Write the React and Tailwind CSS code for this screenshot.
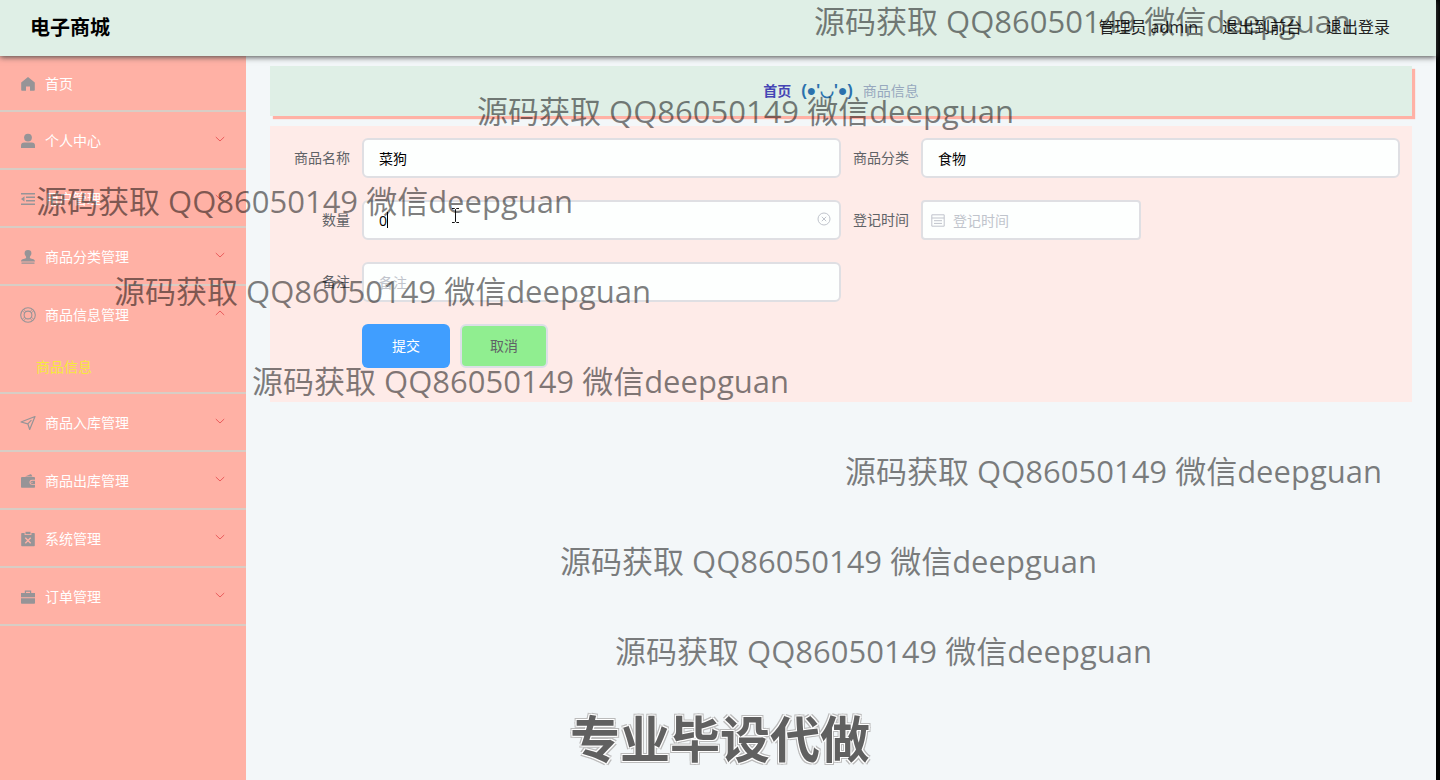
import React, { useState } from "react";

const glyph = "h-4 w-4 shrink-0 text-[#969497]";

const HomeIcon = () => (
  <svg className={glyph} viewBox="0 0 16 16" fill="currentColor">
    <path d="M8 1 1.200 6.600V14a.8.8 0 0 0 .8.8h4v-4.300h4v4.300h4a.8.8 0 0 0 .8-.8V6.600z" />
  </svg>
);

const UserIcon = () => (
  <svg className={glyph} viewBox="0 0 16 16" fill="currentColor">
    <circle cx="8" cy="4.6" r="3.9" />
    <path d="M1 15v-2.200A3.300 3.300 0 0 1 4.300 9.500h7.400A3.300 3.300 0 0 1 15 12.800V15z" />
  </svg>
);

const FoldIcon = () => (
  <svg className={glyph} viewBox="0 0 16 16" fill="currentColor">
    <path d="M1 2h14v1.500H1zM6 5.500h9V7H6zM6 9h9v1.500H6zM1 12.500h14V14H1zM4.500 5.200v5.600L1 8z" />
  </svg>
);

const StampIcon = () => (
  <svg className={glyph} viewBox="0 0 16 16" fill="currentColor">
    <path d="M8 1a3.400 3.400 0 0 0-3.400 3.500c0 2 1.900 2.500 1.500 4.300-.3 1.200-5.100.6-5.100 3.700h14c0-3.100-4.800-2.500-5.100-3.700-.4-1.800 1.500-2.300 1.500-4.300A3.400 3.400 0 0 0 8 1zM1.500 13.500h13v1.300h-13z" />
  </svg>
);

const HelpIcon = () => (
  <svg className={glyph} viewBox="0 0 16 16" fill="none" stroke="currentColor" strokeWidth="1.100">
    <circle cx="8" cy="8" r="7.300" />
    <circle cx="8" cy="8" r="3.900" />
    <path d="m3.900 2.300 2 2.600M2.300 3.900l2.600 2M12.100 2.300l-2 2.600M13.700 3.900l-2.600 2M3.900 13.700l2-2.600M2.300 12.100l2.600-2M12.100 13.700l-2-2.600M13.700 12.100l-2.600-2" strokeWidth=".8" />
  </svg>
);

const PositionIcon = () => (
  <svg className={glyph} viewBox="0 0 16 16" fill="none" stroke="currentColor" strokeWidth="1.200" strokeLinejoin="round">
    <path d="M15 1.500 9.700 14.500 7.800 8.800 1 7z" />
    <path d="m7.800 8.800 3.600-3.700" />
  </svg>
);

const WalletIcon = () => (
  <svg className={glyph} viewBox="0 0 16 16" fill="currentColor">
    <path d="m5 3.600 5.500-2.300a.8.8 0 0 1 1 .4l.9 1.900z" />
    <path d="M2 4h12a1 1 0 0 1 1 1v1.800h-3a2.500 2.500 0 0 0 0 5h3V14a.8.8 0 0 1-.8.8H1.800A.8.8 0 0 1 1 14V5a1 1 0 0 1 1-1z" />
    <path d="M12 7.700h3v3.200h-3a1.600 1.600 0 0 1 0-3.200zm0 1a.6.6 0 1 0 0 1.200.6.6 0 0 0 0-1.200z" fillRule="evenodd" />
  </svg>
);

const ClipboardIcon = () => (
  <svg className={glyph} viewBox="0 0 16 16" fill="currentColor">
    <path d="M5.500.8h5v2.400h-5z" />
    <path d="M2 2h2.600v2h6.800V2H14a.8.8 0 0 1 .8.800V14.500a.8.8 0 0 1-.8.800H2a.8.8 0 0 1-.8-.8V2.800A.8.8 0 0 1 2 2z" />
    <path d="m5.300 6.800 5.400 5.400m0-5.400-5.400 5.400" stroke="#ffb1a5" strokeWidth="1.400" />
  </svg>
);

const CaseIcon = () => (
  <svg className={glyph} viewBox="0 0 16 16" fill="currentColor">
    <path d="M4.800 4V1.500h6.400V4H15v4.200H1V4zm1.200 0h4V2.700H6zM1 9.200h14v4.800a.8.800 0 0 1-.8.800H1.800A.8.8 0 0 1 1 14z" fillRule="evenodd" />
  </svg>
);

const Arrow = ({ up }) => (
  <svg className={`mb-1 h-3 w-3 text-[#ea5c5c] ${up ? "rotate-180" : ""}`} viewBox="0 0 12 12" fill="none" stroke="currentColor">
    <path d="m1.800 4 4.200 4 4.200-4" />
  </svg>
);

const menus = [
  { label: "个人中心", icon: <UserIcon /> },
  { label: "用户管理", icon: <FoldIcon /> },
  { label: "商品分类管理", icon: <StampIcon /> },
  { label: "商品信息管理", icon: <HelpIcon />, children: ["商品信息"] },
  { label: "商品入库管理", icon: <PositionIcon /> },
  { label: "商品出库管理", icon: <WalletIcon /> },
  { label: "系统管理", icon: <ClipboardIcon /> },
  { label: "订单管理", icon: <CaseIcon /> },
];

// overlay lines, one every 90px
const marks = [
  "top-0 left-[814px]",
  "top-[90px] left-[477px]",
  "top-[180px] left-[36px]",
  "top-[270px] left-[114px]",
  "top-[360px] left-[252px]",
  "top-[450px] left-[845px]",
  "top-[540px] left-[560px]",
  "top-[630px] left-[615px]",
];

const inputStyle =
  "h-10 w-full rounded-md border-2 border-[#dfdfe3] bg-[#fdfffe] px-[15px] text-sm text-black outline-none placeholder:text-[#c0c4cc]";

const Field = ({ id, label, children }) => (
  <div className="flex items-center">
    <label htmlFor={id} className="w-20 shrink-0 pr-3 text-right text-sm text-[#606266]">
      {label}
    </label>
    <div className="relative flex-1">{children}</div>
  </div>
);

const Sidebar = () => {
  const [open, setOpen] = useState("商品信息管理");

  return (
    <aside className="w-[246px] shrink-0 bg-[#ffb1a5] text-sm text-white">
      <nav>
        <a href="#home" className="flex h-14 items-center gap-[9px] border-b-2 border-[#d8cdc5] pt-[2px] pl-5">
          <HomeIcon />
          首页
        </a>
        {menus.map((menu) => (
          <div key={menu.label} className="border-b-2 border-[#d8cdc5]">
            <button
              type="button"
              onClick={() => setOpen(open === menu.label ? "" : menu.label)}
              className="flex h-14 w-full items-center gap-[9px] pt-[2px] pr-5 pl-5"
            >
              {menu.icon}
              <span className="flex-1 text-left">{menu.label}</span>
              <Arrow up={open === menu.label} />
            </button>
            {open === menu.label &&
              menu.children?.map((child) => (
                <a key={child} href="#goods" className="flex h-[50px] items-center pl-9 text-[#f5ea3c]">
                  {child}
                </a>
              ))}
          </div>
        ))}
      </nav>
    </aside>
  );
};

const GoodsForm = () => {
  const [name, setName] = useState("菜狗");
  const [category, setCategory] = useState("食物");
  const [count, setCount] = useState("0");

  return (
    <form className="bg-[#feebe8] px-3 pt-3 pb-[34px]" onSubmit={(e) => e.preventDefault()}>
      <div className="grid grid-cols-2 gap-y-[22px]">
        <Field id="name" label="商品名称">
          <input id="name" className={inputStyle} value={name} onChange={(e) => setName(e.target.value)} />
        </Field>
        <Field id="category" label="商品分类">
          <input id="category" className={inputStyle} value={category} onChange={(e) => setCategory(e.target.value)} />
        </Field>
        <Field id="count" label="数量">
          <input id="count" className={inputStyle} value={count} onChange={(e) => setCount(e.target.value)} />
          <span className="absolute top-3 left-[25px] h-4 w-px bg-black" />
          <button type="button" aria-label="清空" onClick={() => setCount("")} className="absolute top-3 right-[10px]">
            <svg className="h-3.5 w-3.5 text-[#c0c4cc]" viewBox="0 0 14 14" fill="none" stroke="currentColor">
              <circle cx="7" cy="7" r="6" />
              <path d="m4.800 4.800 4.400 4.400m0-4.400L4.800 9.200" />
            </svg>
          </button>
        </Field>
        <Field id="date" label="登记时间">
          <div className="relative w-[220px]">
            <input
              id="date"
              placeholder="登记时间"
              className="h-10 w-full rounded border-2 border-[#dfdfe3] bg-[#fdfffe] pl-[30px] text-sm outline-none placeholder:text-[#c0c4cc]"
            />
            <svg className="absolute top-[13px] left-[10px] h-3.5 w-3.5 text-[#c0c4cc]" viewBox="0 0 14 14" fill="none" stroke="currentColor">
              <path d="M.8 1.800h12.400v11.400H.8zM.8 5h12.400M3 7.700h8M3 10.400h8" />
            </svg>
          </div>
        </Field>
        <Field id="remark" label="备注">
          <input id="remark" placeholder="备注" className={inputStyle} />
        </Field>
      </div>
      <div className="mt-[22px] flex items-center gap-[10px] pl-20">
        <button type="submit" className="h-11 w-[88px] rounded-md bg-[#409eff] text-sm text-white">
          提交
        </button>
        <button type="button" className="h-11 w-[88px] rounded-md border-2 border-[#dcdfe6] bg-[#90ee90] text-sm text-[#606266]">
          取消
        </button>
      </div>
    </form>
  );
};

export default function App() {
  return (
    <div className="relative flex min-h-screen overflow-hidden bg-black pr-1 font-['Open_Sans','Noto_Sans_CJK_SC',sans-serif]">
      <div className="flex flex-1 flex-col bg-[#f3f7f9]">
        <header className="z-10 flex h-14 items-center justify-between bg-[#dfefe6] pr-[46px] pl-[30px] shadow-[0_1px_6px_#444]">
          <h1 className="text-xl font-bold text-black">电子商城</h1>
          <div className="flex items-center gap-6 pb-[3px] text-base text-[#222]">
            <span>管理员 admin</span>
            <a href="#front">退出到前台</a>
            <a href="#logout">退出登录</a>
          </div>
        </header>
        <div className="flex flex-1">
          <Sidebar />
          <main className="flex-1 px-6 pt-[10px]">
            <div className="mb-[10px] flex h-[50px] items-center justify-center gap-[10px] bg-[#dfefe6] text-sm shadow-[3px_3px_1px_#ffb1a5]">
              <a href="#home" className="font-bold text-[#4545b5]">首页</a>
              <span className="font-['Liberation_Sans','Noto_Sans_CJK_SC',sans-serif] text-base font-bold text-[#2b71ad]">(●'◡'●)</span>
              <span className="text-[#97a8be]">商品信息</span>
            </div>
            <GoodsForm />
          </main>
        </div>
      </div>

      <svg className="pointer-events-none absolute top-[207px] left-[451px] h-[17px] w-[9px]" viewBox="0 0 9 17" fill="none" stroke="#111">
        <path d="M1 1.500h2.500l1 1 1-1H8M4.500 2.500v12M1 15.500h2.500l1-1 1 1H8" />
      </svg>

      <div className="pointer-events-none absolute inset-0 z-20">
        {marks.map((pos) => (
          <p key={pos} className={`absolute text-[31px] leading-[42px] whitespace-nowrap text-black/50 ${pos}`}>
            源码获取 QQ86050149 微信deepguan
          </p>
        ))}
        <p className="absolute inset-x-0 bottom-0 text-center text-[50px] leading-[82px] font-bold text-[#606060] [text-shadow:1px_1px_0_#fff,-1px_-1px_0_#fff,1px_-1px_0_#fff,-1px_1px_0_#fff,2px_2px_0_#bbb,-2px_-2px_0_#bbb,2px_-2px_0_#bbb,-2px_2px_0_#bbb]">
          专业毕设代做
        </p>
      </div>
    </div>
  );
}
